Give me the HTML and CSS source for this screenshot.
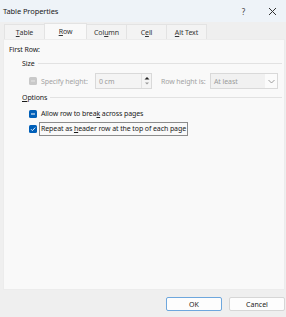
FILE: index.html
```html
<!DOCTYPE html>
<html lang="en">
<head>
    <meta charset="UTF-8">
    <title>Table Properties</title>
    <link rel="stylesheet" href="styles.css">
</head>
<body>
    <div class="dialog">
        <div class="titlebar">
            <span class="title">Table Properties</span>
            <span class="help">?</span>
            <svg class="close" width="9" height="9" viewBox="0 0 9 9">
                <path d="M1 1 L8 8 M8 1 L1 8" stroke="#333" stroke-width="1"/>
            </svg>
        </div>

        <div class="tabs">
            <div class="tab"><u>T</u>able</div>
            <div class="tab active"><u>R</u>ow</div>
            <div class="tab">Col<u>u</u>mn</div>
            <div class="tab">C<u>e</u>ll</div>
            <div class="tab"><u>A</u>lt Text</div>
        </div>

        <div class="panel">
            <div class="heading">First Row:</div>

            <div class="group-title"><span>Size</span><div class="rule"></div></div>
            <div class="size-row">
                <span class="check disabled">
                    <svg width="8" height="8" viewBox="0 0 8 8"><path d="M2 4 H6" stroke="#e6e6e6" stroke-width="1"/></svg>
                </span>
                <span class="muted label-spec">Specify height:</span>
                <div class="spin">
                    <span class="spin-value">0 cm</span>
                    <span class="spin-arrows">
                        <svg width="6" height="12" viewBox="0 0 6 12">
                            <path d="M0.5 4.5 L3 2 L5.5 4.5 Z" fill="#222"/>
                            <path d="M1 7.5 L3 9.5 L5 7.5 Z" fill="#999"/>
                        </svg>
                    </span>
                </div>
                <span class="muted label-rh">Row height is:</span>
                <div class="select">
                    <span class="select-value">At least</span>
                    <span class="select-arrow">
                        <svg width="7" height="5" viewBox="0 0 7 5"><path d="M0.5 1 L3.5 4 L6.5 1" fill="none" stroke="#888" stroke-width="0.8"/></svg>
                    </span>
                </div>
            </div>

            <div class="group-title options"><span><u>O</u>ptions</span><div class="rule"></div></div>
            <div class="option first">
                <span class="check on">
                    <svg width="8" height="8" viewBox="0 0 8 8"><path d="M2 4 H6" stroke="#fff" stroke-width="1"/></svg>
                </span>
                <span>Allow row to brea<u>k</u> across pages</span>
            </div>
            <div class="option">
                <span class="check on">
                    <svg width="8" height="8" viewBox="0 0 8 8"><path d="M2 4.2 L3.4 5.6 L6.2 2.6" fill="none" stroke="#fff" stroke-width="0.9"/></svg>
                </span>
                <span class="focus">Repeat as <u>h</u>eader row at the top of each page</span>
            </div>
        </div>

        <div class="footer">
            <button class="btn default">OK</button>
            <button class="btn">Cancel</button>
        </div>
    </div>
</body>
</html>
```

FILE: styles.css
```css
body {
    margin: 0;
    font-family: "Noto Sans", "Open Sans", sans-serif;
    font-size: 7px;
    letter-spacing: -0.1px;
    color: #1a1a1a;
    background: #efefef;
}

.dialog {
    width: 286px;
    height: 317px;
    display: flex;
    flex-direction: column;
}

u {
    text-decoration-thickness: 0.6px;
    text-underline-offset: 1px;
}

.titlebar {
    height: 22px;
    background: #eef3f8;
    display: flex;
    align-items: center;
    padding-left: 3px;
}

.title {
    flex: 1;
    font-size: 7.5px;
}

.help {
    font-size: 8px;
    color: #444;
    margin-right: 23px;
}

.close {
    margin-right: 9px;
}

.tabs {
    display: flex;
    padding-left: 4px;
    margin-top: 2px;
    height: 15px;
}

.tab {
    display: flex;
    align-items: center;
    justify-content: center;
    width: 39px;
    background: #f3f3f3;
    border: 1px solid #e3e3e3;
    border-bottom: none;
    margin-right: -1px;
    color: #333;
}

.tab.active {
    width: 41px;
    background: #f9f9f9;
    margin-top: -1px;
}

.panel {
    margin: 0 1px 0 3px;
    height: 251px;
    background: #f9f9f9;
    border: 1px solid #ececec;
    box-sizing: border-box;
    padding: 4px 2px 0 5px;
}

.heading {
    height: 14px;
    line-height: 12px;
}

.group-title {
    display: flex;
    align-items: center;
    gap: 3px;
    margin-left: 13px;
    height: 10px;
}

.group-title.options {
    margin-top: 2px;
}

.rule {
    flex: 1;
    height: 1px;
    background: #e2e2e2;
}

.size-row {
    display: flex;
    align-items: center;
    height: 16px;
    margin: 5px 0 3px 20px;
}

.muted {
    color: #a3a3a3;
}

.check {
    width: 8px;
    height: 8px;
    border-radius: 1.5px;
    display: inline-flex;
    flex-shrink: 0;
    margin-right: 4px;
}

.check.disabled {
    background: #c9c9c9;
}

.check.on {
    background: #005fb8;
}

.label-spec {
    width: 54px;
}

.spin {
    width: 57px;
    height: 16px;
    box-sizing: border-box;
    border: 1px solid #d9d9d9;
    background: #f4f4f4;
    display: flex;
    align-items: center;
}

.spin-value {
    flex: 1;
    padding-left: 3px;
    color: #9a9a9a;
}

.spin-arrows {
    width: 9px;
    height: 14px;
    display: flex;
    align-items: center;
    justify-content: center;
    border-left: 1px solid #e2e2e2;
}

.label-rh {
    margin-left: 9px;
    width: 49px;
}

.select {
    width: 68px;
    height: 16px;
    box-sizing: border-box;
    border: 1px solid #d9d9d9;
    background: #f1f1f1;
    display: flex;
    align-items: center;
}

.select-value {
    flex: 1;
    padding-left: 3px;
    color: #9a9a9a;
}

.select-arrow {
    width: 12px;
    height: 14px;
    background: #fbfbfb;
    display: flex;
    align-items: center;
    justify-content: center;
}

.option {
    display: flex;
    align-items: center;
    height: 15px;
    margin-left: 20px;
}

.option.first {
    margin-top: 4px;
}

.focus {
    border: 1px solid #8c8c8c;
    padding: 0 1px;
    margin-left: -2px;
    line-height: 12px;
}

.footer {
    display: flex;
    justify-content: flex-end;
    gap: 7px;
    padding: 7px 1px 0 0;
}

.btn {
    width: 56px;
    height: 14px;
    box-sizing: border-box;
    font-family: inherit;
    font-size: 7px;
    color: #222;
    background: #fdfdfd;
    border: 1px solid #d6d6d6;
    border-radius: 2px;
    padding: 0;
}

.btn.default {
    border-color: #6ea7dd;
}
```
